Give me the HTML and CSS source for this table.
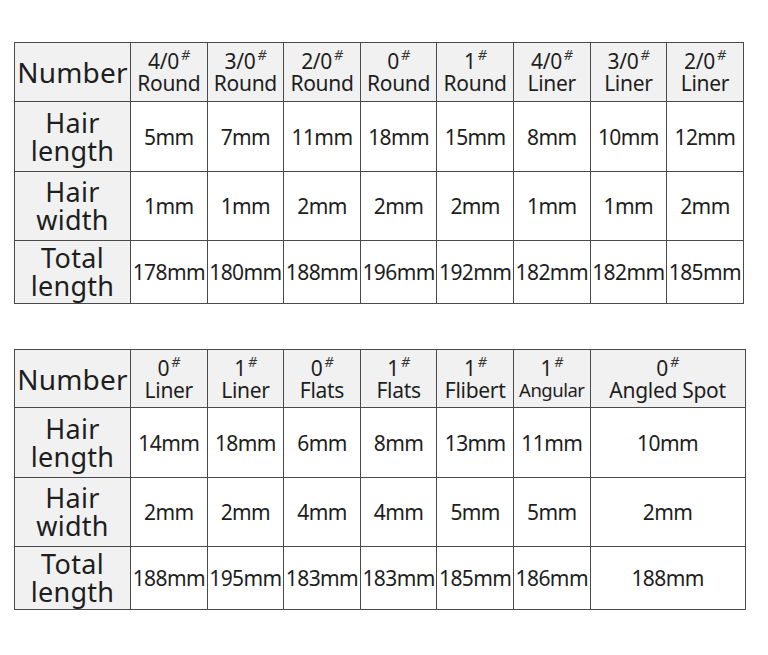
FILE: index.html
```html
<!DOCTYPE html>
<html>
<head>
<meta charset="utf-8">
<link rel="stylesheet" href="styles.css">
</head>
<body>
<div class="page">
  <table class="spec t1">
    <colgroup>
      <col class="c-label"><col><col><col><col><col><col><col><col>
    </colgroup>
    <tr class="head">
      <th class="label big">Number</th>
      <th><span class="num">4/0<sup>#</sup></span><span class="type">Round</span></th>
      <th><span class="num">3/0<sup>#</sup></span><span class="type">Round</span></th>
      <th><span class="num">2/0<sup>#</sup></span><span class="type">Round</span></th>
      <th><span class="num">0<sup>#</sup></span><span class="type">Round</span></th>
      <th><span class="num">1<sup>#</sup></span><span class="type">Round</span></th>
      <th><span class="num">4/0<sup>#</sup></span><span class="type">Liner</span></th>
      <th><span class="num">3/0<sup>#</sup></span><span class="type">Liner</span></th>
      <th><span class="num">2/0<sup>#</sup></span><span class="type">Liner</span></th>
    </tr>
    <tr class="r-len">
      <th class="label">Hair<br>length</th>
      <td>5mm</td><td>7mm</td><td>11mm</td><td>18mm</td><td>15mm</td><td>8mm</td><td>10mm</td><td>12mm</td>
    </tr>
    <tr class="r-wid">
      <th class="label">Hair<br>width</th>
      <td>1mm</td><td>1mm</td><td>2mm</td><td>2mm</td><td>2mm</td><td>1mm</td><td>1mm</td><td>2mm</td>
    </tr>
    <tr class="r-tot">
      <th class="label">Total<br>length</th>
      <td>178mm</td><td>180mm</td><td>188mm</td><td>196mm</td><td>192mm</td><td>182mm</td><td>182mm</td><td>185mm</td>
    </tr>
  </table>

  <table class="spec t2">
    <colgroup>
      <col class="c-label"><col><col><col><col><col><col><col class="c-wide">
    </colgroup>
    <tr class="head">
      <th class="label big">Number</th>
      <th><span class="num">0<sup>#</sup></span><span class="type">Liner</span></th>
      <th><span class="num">1<sup>#</sup></span><span class="type">Liner</span></th>
      <th><span class="num">0<sup>#</sup></span><span class="type">Flats</span></th>
      <th><span class="num">1<sup>#</sup></span><span class="type">Flats</span></th>
      <th><span class="num">1<sup>#</sup></span><span class="type">Flibert</span></th>
      <th><span class="num">1<sup>#</sup></span><span class="type small">Angular</span></th>
      <th><span class="num">0<sup>#</sup></span><span class="type">Angled Spot</span></th>
    </tr>
    <tr class="r-len">
      <th class="label">Hair<br>length</th>
      <td>14mm</td><td>18mm</td><td>6mm</td><td>8mm</td><td>13mm</td><td>11mm</td><td>10mm</td>
    </tr>
    <tr class="r-wid">
      <th class="label">Hair<br>width</th>
      <td>2mm</td><td>2mm</td><td>4mm</td><td>4mm</td><td>5mm</td><td>5mm</td><td>2mm</td>
    </tr>
    <tr class="r-tot">
      <th class="label">Total<br>length</th>
      <td>188mm</td><td>195mm</td><td>183mm</td><td>183mm</td><td>185mm</td><td>186mm</td><td>188mm</td>
    </tr>
  </table>
</div>
</body>
</html>
```

FILE: styles.css
```css
html, body {
  margin: 0;
  padding: 0;
  background: #ffffff;
}

.page {
  width: 768px;
  height: 655px;
  padding: 42px 0 0 14px;
  box-sizing: border-box;
  font-family: "Noto Sans", "Open Sans", sans-serif;
  color: #1e1e1e;
}

.spec {
  border-collapse: collapse;
  table-layout: fixed;
  width: 729px;
}

.t2 {
  margin-top: 45px;
  width: 731px;
}

.spec col {
  width: 76.6px;
}

.spec col.c-label {
  width: 116px;
}

.t2 col.c-wide {
  width: 155px;
}

.spec th,
.spec td {
  border: 1.5px solid #4a4a4a;
  padding: 0;
  text-align: center;
  vertical-align: middle;
  font-weight: normal;
  white-space: nowrap;
  overflow: visible;
}

.spec td {
  font-size: 21px;
  letter-spacing: -0.6px;
  color: #1e1e1e;
}

.head th {
  background: #f1f1f1;
  height: 58px;
}

.t2 .head th {
  height: 57px;
}

.spec .label {
  background: #f1f1f1;
  font-size: 27px;
  line-height: 28px;
  letter-spacing: 0.3px;
  color: #1e1e1e;
}

.spec .label.big {
  font-size: 28px;
  letter-spacing: 0.2px;
}

.r-len th, .r-len td { height: 69px; }
.r-wid th, .r-wid td { height: 68px; }
.r-tot th, .r-tot td { height: 62px; }

.num,
.type {
  display: block;
  font-size: 21px;
  line-height: 22px;
  letter-spacing: -0.3px;
}

.num sup {
  font-size: 14px;
  line-height: 0;
  vertical-align: top;
  position: relative;
  top: 5px;
  margin-left: 2px;
  color: #333;
  font-style: italic;
}

.type.small {
  font-size: 18.5px;
  letter-spacing: -0.5px;
}
```
